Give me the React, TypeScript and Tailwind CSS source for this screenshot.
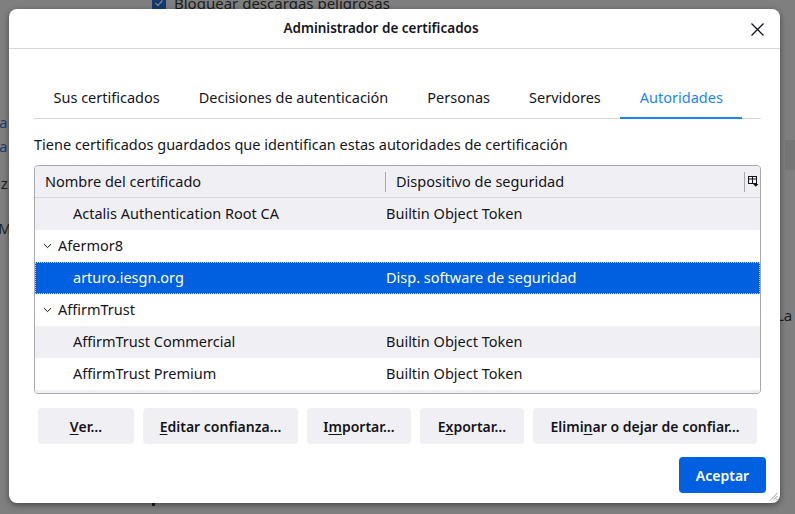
import React from 'react';

type Row = { name: string; device?: string; group?: boolean; selected?: boolean };

const rows: Row[] = [
  { name: 'Actalis Authentication Root CA', device: 'Builtin Object Token' },
  { name: 'Afermor8', group: true },
  { name: 'arturo.iesgn.org', device: 'Disp. software de seguridad', selected: true },
  { name: 'AffirmTrust', group: true },
  { name: 'AffirmTrust Commercial', device: 'Builtin Object Token' },
  { name: 'AffirmTrust Premium', device: 'Builtin Object Token' },
  { name: '', device: '' },
];

const tabs = ['Sus certificados', 'Decisiones de autenticación', 'Personas', 'Servidores', 'Autoridades'];

const Chevron = () => (
  <svg width="9" height="6" viewBox="0 0 9 6" className="mr-[6px]">
    <path d="M1 1.2 L4.5 4.6 L8 1.2" fill="none" stroke="#15141a" strokeWidth="1" />
  </svg>
);

const ColumnPicker = () => (
  <svg width="11" height="11" viewBox="0 0 11 11">
    <rect x="0.5" y="0.5" width="8" height="7" fill="none" stroke="#15141a" strokeWidth="1" />
    <line x1="0.5" y1="3" x2="8.5" y2="3" stroke="#15141a" strokeWidth="1" />
    <line x1="4.5" y1="0.5" x2="4.5" y2="7.5" stroke="#15141a" strokeWidth="1" />
    <path d="M5 8 L10.5 8 L7.75 10.8 Z" fill="#15141a" />
  </svg>
);

const Btn = ({ w, children }: { w: string; children: React.ReactNode }) => (
  <button className={`${w} h-[36px] rounded-[4px] bg-[#f0f0f4] text-[14px] font-semibold text-[#15141a] flex items-center justify-center whitespace-nowrap`}>
    {children}
  </button>
);

const App: React.FC = () => {
  return (
    <div
      className="relative w-[795px] h-[514px] overflow-hidden bg-[#7f7f7f] text-[#15141a]"
      style={{ fontFamily: '"Noto Sans", "DejaVu Sans", sans-serif' }}
    >
      {/* dimmed preferences page behind the dialog */}
      <div className="absolute left-[152px] top-[-8px] flex items-center gap-[8px] text-[15px] text-[#1c1c1c]">
        <div className="w-[14px] h-[14px] rounded-[2px] bg-[#113870] flex items-center justify-center">
          <svg width="10" height="10" viewBox="0 0 10 10">
            <path d="M1.5 5 L4 7.5 L8.5 2.5" fill="none" stroke="#7f7f7f" strokeWidth="1.4" />
          </svg>
        </div>
        <span>
          Bloquear <u className="underline-offset-2">d</u>escargas peligrosas
        </span>
      </div>
      <div className="absolute left-[-1px] top-[111px] text-[15px] text-[#1a3e6e]">a</div>
      <div className="absolute left-[-1px] top-[135px] text-[15px] text-[#1a3e6e]">a</div>
      <div className="absolute left-[-3px] top-[172px] text-[15px] text-[#1c1c1c]">iz</div>
      <div className="absolute left-[-2px] top-[217px] text-[15px] text-[#1c1c1c]">M</div>
      <div className="absolute left-[776px] top-[304px] text-[15px] text-[#1c1c1c]">La</div>
      <div className="absolute left-[785px] top-[140px] w-[10px] h-[30px] bg-[#767676]" />
      <div className="absolute left-[152px] top-[500px] w-[3px] h-[6px] bg-[#1c1c1c]" />

      {/* dialog */}
      <div className="absolute left-[9px] top-[9px] w-[771px] h-[494px] bg-white rounded-[8px] shadow-[0_2px_6px_rgba(0,0,0,0.45)] flex flex-col">
        <div className="relative h-[40px] shrink-0 border-b border-[#d7d7db] flex items-center justify-center pr-[27px]">
          <span className="text-[13.5px] font-semibold">Administrador de certificados</span>
          <svg className="absolute left-[742px] top-[14px]" width="13" height="13" viewBox="0 0 13 13">
            <path d="M0.5 0.5 L12.5 12.5 M12.5 0.5 L0.5 12.5" stroke="#15141a" strokeWidth="1.3" />
          </svg>
        </div>

        <div className="pl-[25px] pr-[19px] flex flex-col">
          <div className="mt-[29px] flex border-b border-[#d7d7db] h-[41px]">
            {tabs.map((t, i) => (
              <div
                key={t}
                className={
                  i === 4
                    ? 'shrink-0 whitespace-nowrap px-[19.5px] flex items-center text-[14.5px] text-[#1a85ff] border-b-2 border-[#1a85ff] -mb-[1px]'
                    : 'shrink-0 whitespace-nowrap px-[19.5px] flex items-center text-[14.5px] text-[#15141a]'
                }
              >
                {t}
              </div>
            ))}
          </div>

          <p className="mt-[15px] text-[14.5px] leading-[20px] whitespace-nowrap">
            Tiene certificados guardados que identifican estas autoridades de certificación
          </p>

          <div className="mt-[11px] h-[229px] border border-[#a8a8ad] rounded-[4px] overflow-hidden flex flex-col">
            <div className="h-[32px] shrink-0 bg-[#f0f0f4] border-b border-[#d7d7db] flex items-center text-[14.5px]">
              <div className="w-[350px] pl-[10px]">Nombre del certificado</div>
              <div className="w-[1px] h-[20px] bg-[#a8a8ad]" />
              <div className="flex-1 pl-[10px]">Dispositivo de seguridad</div>
              <div className="w-[1px] h-[20px] bg-[#a8a8ad]" />
              <div className="w-[15px] flex justify-center pl-[2px]">
                <ColumnPicker />
              </div>
            </div>
            {rows.map((r, i) => (
              <div
                key={i}
                className={
                  r.selected
                    ? 'h-[32px] shrink-0 flex items-center text-[14.5px] bg-[#0060df] text-white border border-dotted border-[#f5d060]'
                    : i % 2 === 0
                    ? 'h-[32px] shrink-0 flex items-center text-[14.5px] bg-[#f0f0f4]'
                    : 'h-[32px] shrink-0 flex items-center text-[14.5px] bg-white'
                }
              >
                {r.group ? (
                  <div className="pl-[8px] flex items-center">
                    <Chevron />
                    {r.name}
                  </div>
                ) : (
                  <>
                    <div className={r.selected ? 'w-[350px] pl-[37px]' : 'w-[351px] pl-[38px]'}>{r.name}</div>
                    <div className="flex-1">{r.device}</div>
                  </>
                )}
              </div>
            ))}
          </div>

          <div className="mt-[14px] px-[4px] flex gap-[9px]">
            <Btn w="w-[96px]">
              <u className="underline-offset-2">V</u>er…
            </Btn>
            <Btn w="w-[155px]">
              <u className="underline-offset-2">E</u>ditar confianza…
            </Btn>
            <Btn w="w-[104px]">
              I<u className="underline-offset-2">m</u>portar…
            </Btn>
            <Btn w="w-[104px]">
              E<u className="underline-offset-2">x</u>portar…
            </Btn>
            <Btn w="w-[224px]">
              Elimi<u className="underline-offset-2">n</u>ar o dejar de confiar…
            </Btn>
          </div>
        </div>

        <div className="mt-[13px] pr-[14px] flex justify-end">
          <button className="w-[87px] h-[36px] rounded-[4px] bg-[#0060df] text-white text-[14px] font-semibold">
            Aceptar
          </button>
        </div>

        <svg className="absolute right-[2px] bottom-[2px]" width="10" height="10" viewBox="0 0 10 10">
          <path d="M9.5 2 L2 9.5 M9.5 5 L5 9.5 M9.5 8 L8 9.5" stroke="#9a9a9a" strokeWidth="1" />
        </svg>
      </div>
    </div>
  );
};

export default App;
